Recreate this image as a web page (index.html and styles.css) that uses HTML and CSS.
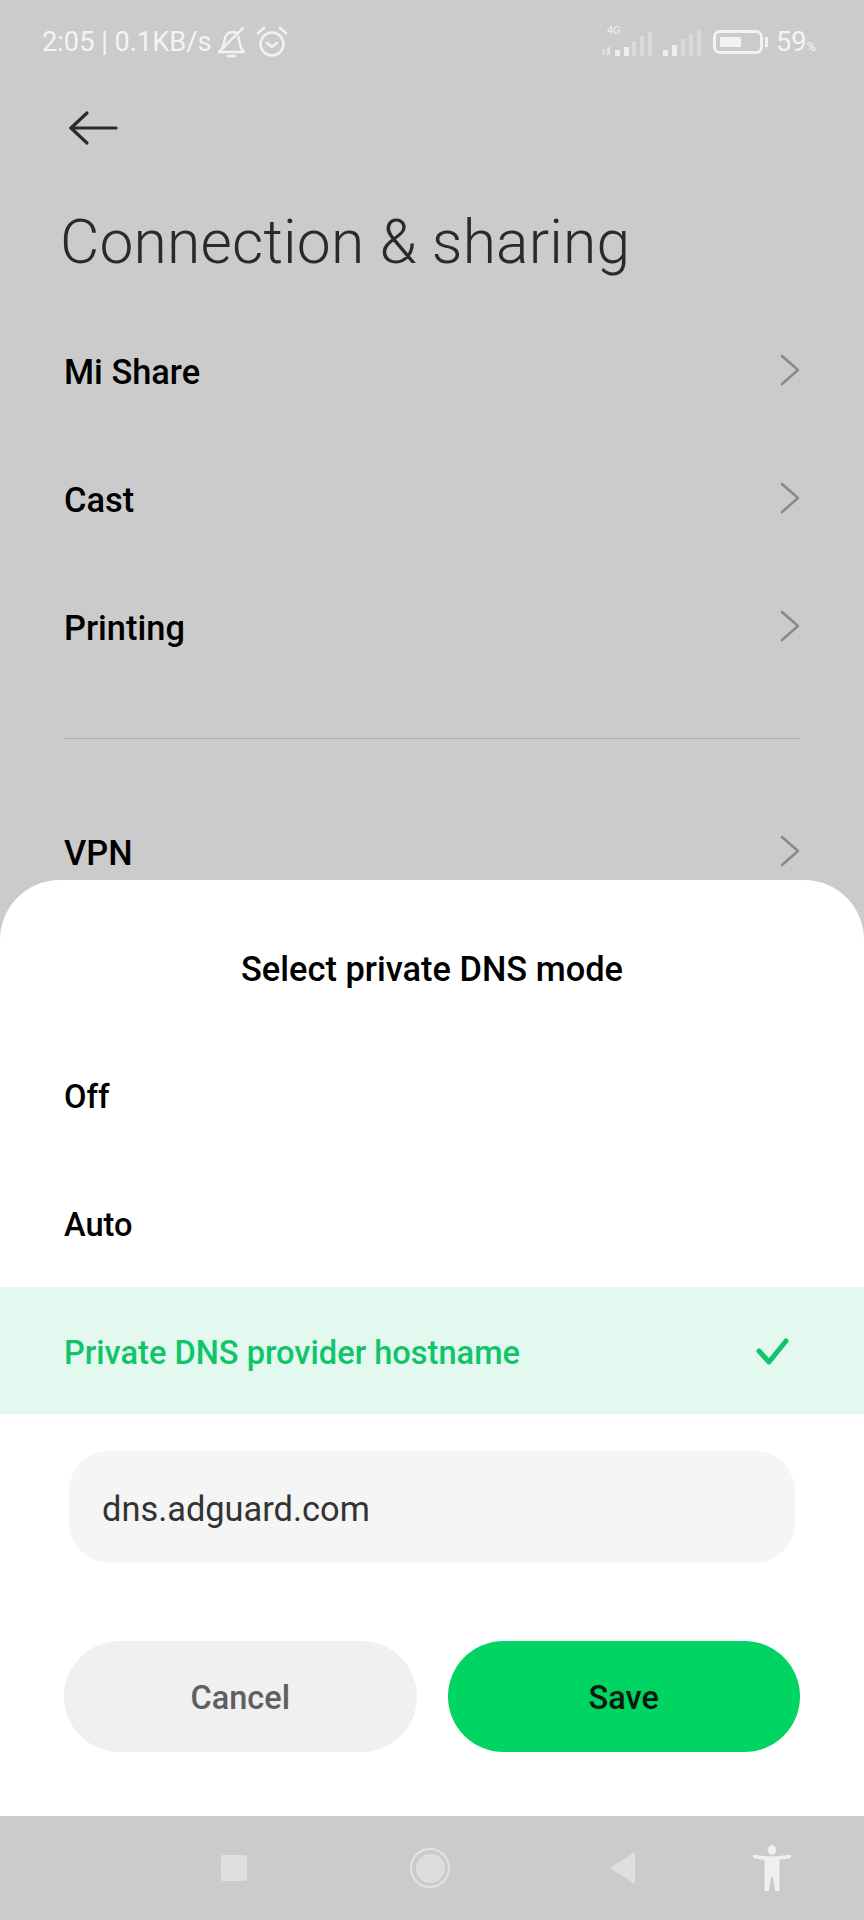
FILE: index.html
```html
<!DOCTYPE html>
<html lang="en">
<head>
    <meta charset="UTF-8">
    <meta name="viewport" content="width=device-width, initial-scale=1.0">
    <title>Connection &amp; sharing</title>
    <link rel="stylesheet" href="styles.css">
</head>
<body>
    <div class="screen">
        <div class="status-bar">
            <div class="status-left">
                <span class="status-text">2:05 | 0.1KB/s</span>
                <svg class="status-icon" width="30" height="34" viewBox="0 0 30 34" fill="none" stroke="#f2f2f2" stroke-width="2.4" stroke-linecap="round" stroke-linejoin="round">
                    <path d="M2 27h25c-3-3-4-6-4.500-10l-1-5"/>
                    <path d="M2 27c4-3 5-7 5.500-12 .5-5 4-8 8-8 2 0 4 .7 5 2"/>
                    <path d="M4 25L26 3"/>
                    <path d="M11 31h7"/>
                </svg>
                <svg class="status-icon alarm" width="34" height="34" viewBox="0 0 34 34" fill="none" stroke="#f2f2f2" stroke-width="2.6" stroke-linecap="round" stroke-linejoin="round">
                    <circle cx="17" cy="19" r="11.500"/>
                    <path d="M12 18l5 4 5-4"/>
                    <path d="M3 8l6-5"/>
                    <path d="M31 8l-6-5"/>
                </svg>
            </div>
            <div class="status-right">
                <div class="signal signal-4g">
                    <span class="net-label">4G</span>
                    <svg width="52" height="36" viewBox="0 0 52 36" fill="#eeeeee">
                        <rect x="0" y="25" width="3" height="6" opacity="0.5"/>
                        <rect x="5" y="23" width="3" height="8" opacity="0.7"/>
                        <rect x="13" y="26" width="5" height="6"/>
                        <rect x="22" y="23" width="5" height="9"/>
                        <rect x="30" y="17" width="4" height="15" opacity="0.45"/>
                        <rect x="38" y="12" width="4" height="20" opacity="0.45"/>
                        <rect x="46" y="8" width="4" height="24" opacity="0.45"/>
                    </svg>
                </div>
                <svg class="signal" width="40" height="36" viewBox="0 0 40 36" fill="#eeeeee">
                    <rect x="0" y="26" width="5" height="6"/>
                    <rect x="9" y="21" width="5" height="11"/>
                    <rect x="18" y="15" width="4" height="17" opacity="0.45"/>
                    <rect x="26" y="10" width="4" height="22" opacity="0.45"/>
                    <rect x="34" y="6" width="4" height="26" opacity="0.45"/>
                </svg>
                <div class="battery">
                    <div class="battery-body"><div class="battery-fill" style="width: 59%"></div></div>
                    <div class="battery-tip"></div>
                </div>
                <span class="status-text percent">59<small>%</small></span>
            </div>
        </div>

        <div class="back-row">
            <svg width="50" height="36" viewBox="0 0 50 36" fill="none" stroke="#2b2b2b" stroke-width="3.200" stroke-linecap="round" stroke-linejoin="round">
                <path d="M3 18h45"/>
                <path d="M19 3L3 18l16 15"/>
            </svg>
        </div>

        <h1 class="page-title">Connection &amp; sharing</h1>

        <ul class="menu">
            <li class="menu-item">Mi Share<svg class="chevron" width="20" height="32" viewBox="0 0 20 32"><path d="M2 2l16 14L2 30"/></svg></li>
            <li class="menu-item">Cast<svg class="chevron" width="20" height="32" viewBox="0 0 20 32"><path d="M2 2l16 14L2 30"/></svg></li>
            <li class="menu-item">Printing<svg class="chevron" width="20" height="32" viewBox="0 0 20 32"><path d="M2 2l16 14L2 30"/></svg></li>
        </ul>
        <div class="divider"></div>
        <ul class="menu">
            <li class="menu-item">VPN<svg class="chevron" width="20" height="32" viewBox="0 0 20 32"><path d="M2 2l16 14L2 30"/></svg></li>
        </ul>

        <div class="sheet">
            <h2 class="sheet-title">Select private DNS mode</h2>
            <div class="option">Off</div>
            <div class="option">Auto</div>
            <div class="option selected">
                Private DNS provider hostname
                <svg class="check" width="36" height="28" viewBox="0 0 36 28" fill="none" stroke="#10c569" stroke-width="5" stroke-linecap="round" stroke-linejoin="round"><path d="M5 14l10 11L32 4"/></svg>
            </div>
            <div class="host-input">dns.adguard.com</div>
            <div class="buttons">
                <button class="btn btn-cancel">Cancel</button>
                <button class="btn btn-save">Save</button>
            </div>
        </div>

        <div class="nav-bar">
            <div class="nav-square"></div>
            <div class="nav-circle"><div class="nav-dot"></div></div>
            <div class="nav-back"></div>
            <svg class="nav-person" width="40" height="46" viewBox="0 0 40 46" fill="#efefef">
                <ellipse cx="20" cy="5" rx="4" ry="5"/>
                <path d="M1 11c0-1 1-1.500 2-1.200l12 1.500h10l12-1.500c1-.3 2 .2 2 1.200s-.5 2-2 2.200l-9.500 1.500V46H23l-2-14h-2l-2 14h-4.500V15L3 13.200C1.500 13 1 12 1 11z"/>
            </svg>
        </div>
    </div>
</body>
</html>
```

FILE: styles.css
```css
* {
    box-sizing: border-box;
}

body {
    margin: 0;
    font-family: Roboto, 'Noto Sans', sans-serif;
    background-color: #cbcbcb;
}

.screen {
    position: relative;
    display: flex;
    flex-direction: column;
    width: 864px;
    height: 1920px;
    overflow: hidden;
    background-color: #cbcbcb;
}

.status-bar {
    display: flex;
    justify-content: space-between;
    align-items: center;
    height: 84px;
    padding: 0 48px 0 42px;
    flex-shrink: 0;
}

.status-left,
.status-right {
    display: flex;
    align-items: center;
}

.status-text {
    color: #f4f4f4;
    font-size: 27.200px;
    line-height: 32px;
}

.status-icon {
    margin-left: 5px;
}

.status-icon.alarm {
    margin-left: 8px;
}

.signal {
    position: relative;
    margin-right: 10px;
}

.signal-4g {
    height: 36px;
    margin-right: 9px;
}

.net-label {
    position: absolute;
    left: 5px;
    top: 0;
    color: #eeeeee;
    font-size: 11px;
    line-height: 14px;
}

.battery {
    display: flex;
    align-items: center;
    margin-right: 8px;
}

.battery-body {
    width: 50px;
    height: 24px;
    padding: 4px;
    border: 3px solid #f2f2f2;
    border-radius: 7px;
}

.battery-fill {
    height: 100%;
    background-color: #f2f2f2;
    border-radius: 1px;
}

.battery-tip {
    width: 3px;
    height: 10px;
    margin-left: 2px;
    background-color: #f2f2f2;
}

.percent small {
    font-size: 13px;
    line-height: 1;
}

.back-row {
    display: flex;
    align-items: center;
    height: 72px;
    padding-left: 68px;
    margin-top: 8px;
    flex-shrink: 0;
}

.page-title {
    margin: 39px 0 0 60px;
    color: #2a2a2a;
    font-size: 60.500px;
    line-height: 80px;
    font-weight: 300;
    letter-spacing: 0.2px;
}

.menu {
    list-style: none;
    margin: 0;
    padding: 0;
}

.menu:first-of-type {
    margin-top: 24px;
}

.menu-item {
    display: flex;
    justify-content: space-between;
    align-items: center;
    height: 128px;
    padding: 2px 64px 0;
    color: #000;
    font-size: 34.400px;
    font-weight: 500;
}

.chevron {
    margin-bottom: 5px;
    fill: none;
    stroke: #8a8a8a;
    stroke-width: 2.600;
    stroke-linecap: round;
    stroke-linejoin: round;
}

.divider {
    height: 1px;
    margin: 47px 64px 49px;
    background-color: #adadad;
}

.sheet {
    position: absolute;
    left: 0;
    right: 0;
    top: 880px;
    height: 936px;
    background-color: #fff;
    border-radius: 60px 60px 0 0;
}

.sheet-title {
    margin: 0;
    padding-top: 65px;
    color: #000;
    font-size: 34.400px;
    line-height: 48px;
    font-weight: 500;
    text-align: center;
}

.option {
    display: flex;
    justify-content: space-between;
    align-items: center;
    height: 128px;
    padding: 4px 64px 0;
    color: #000;
    font-size: 32.600px;
    font-weight: 500;
}

.sheet-title + .option {
    margin-top: 38px;
}

.option.selected {
    height: 127px;
    padding-right: 74px;
    background-color: #e3f8ee;
    color: #10c569;
}

.check {
    margin-bottom: 4px;
}

.host-input {
    display: flex;
    align-items: center;
    height: 112px;
    margin: 37px 69px 0;
    padding: 4px 33px 0;
    background-color: #f5f5f5;
    border-radius: 40px;
    color: #333;
    font-size: 34.400px;
}

.buttons {
    display: flex;
    gap: 31px;
    margin-top: 78px;
    padding: 0 64px;
}

.btn {
    flex: 1;
    height: 111px;
    padding: 2px 0 0;
    border: none;
    border-radius: 56px;
    font-family: inherit;
    font-size: 32.500px;
    font-weight: 500;
}

.btn-cancel {
    background-color: #f0f0f0;
    color: #5f5f5f;
}

.btn-save {
    background-color: #00d463;
    color: #0b1a10;
}

.nav-bar {
    position: absolute;
    left: 0;
    right: 0;
    bottom: 0;
    display: flex;
    align-items: center;
    height: 104px;
    padding-left: 221px;
}

.nav-square {
    width: 26px;
    height: 26px;
    background-color: #dfdfdf;
    border-radius: 2px;
}

.nav-circle {
    display: flex;
    justify-content: center;
    align-items: center;
    width: 40px;
    height: 40px;
    margin-left: 163px;
    border: 2px solid #e2e2e2;
    border-radius: 50%;
}

.nav-dot {
    width: 29px;
    height: 29px;
    background-color: #dddddd;
    border-radius: 50%;
}

.nav-back {
    width: 0;
    height: 0;
    margin-left: 160px;
    border-top: 16px solid transparent;
    border-bottom: 16px solid transparent;
    border-right: 25px solid #dfdfdf;
}

.nav-person {
    margin-left: 117px;
}
```
